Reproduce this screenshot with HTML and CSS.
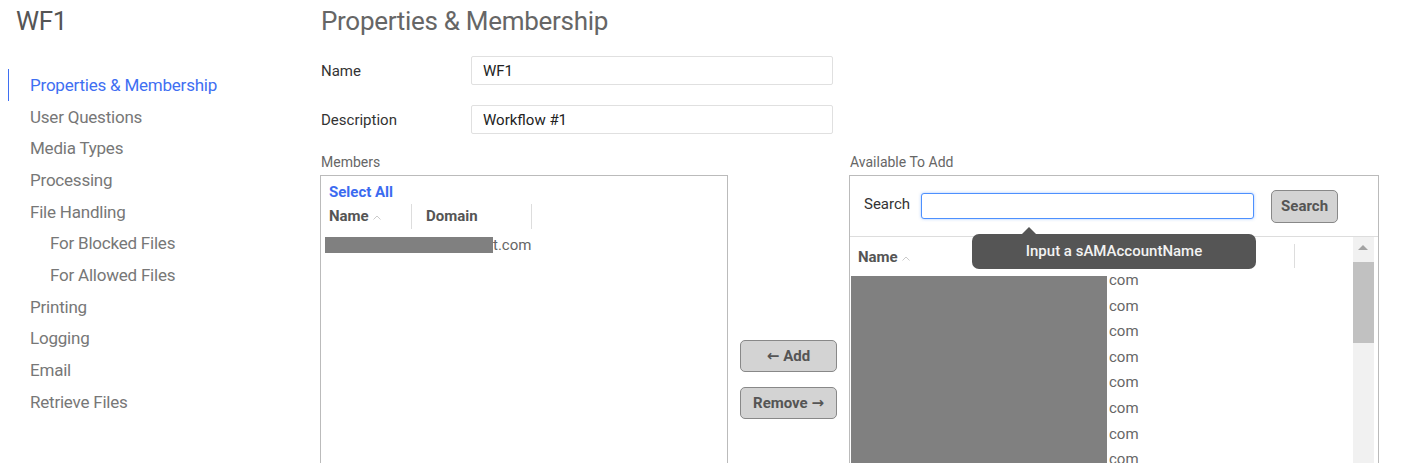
FILE: index.html
```html
<!DOCTYPE html>
<html lang="en">
<head>
    <meta charset="UTF-8">
    <meta name="viewport" content="width=device-width, initial-scale=1.0">
    <title>WF1 - Properties &amp; Membership</title>
    <link rel="stylesheet" href="styles.css">
</head>
<body>
    <div class="page">
        <aside class="sidebar">
            <h1 class="wf-title">WF1</h1>
            <nav class="nav">
                <a class="nav-item active">Properties &amp; Membership</a>
                <a class="nav-item">User Questions</a>
                <a class="nav-item">Media Types</a>
                <a class="nav-item">Processing</a>
                <a class="nav-item">File Handling</a>
                <a class="nav-item sub">For Blocked Files</a>
                <a class="nav-item sub">For Allowed Files</a>
                <a class="nav-item">Printing</a>
                <a class="nav-item">Logging</a>
                <a class="nav-item">Email</a>
                <a class="nav-item">Retrieve Files</a>
            </nav>
        </aside>

        <main class="content">
            <h2 class="page-title">Properties &amp; Membership</h2>

            <div class="field-row">
                <label class="field-label">Name</label>
                <input class="field-input" type="text" value="WF1">
            </div>
            <div class="field-row">
                <label class="field-label">Description</label>
                <input class="field-input" type="text" value="Workflow #1">
            </div>

            <div class="lists">
                <section class="list-panel members">
                    <div class="list-label">Members</div>
                    <div class="list-box">
                        <a class="select-all">Select All</a>
                        <div class="grid-head">
                            <div class="col-name">Name <svg class="caret" viewBox="0 0 8 5" width="8" height="5"><path d="M0.5 4.5 L4 1 L7.5 4.5" fill="none" stroke="#c4c4c4" stroke-width="0.9"/></svg></div>
                            <div class="col-domain">Domain</div>
                        </div>
                        <div class="member-row"><span class="redact"></span>t.com</div>
                    </div>
                </section>

                <div class="move-buttons">
                    <button class="btn"><span class="arrow">&larr;</span> Add</button>
                    <button class="btn">Remove <span class="arrow">&rarr;</span></button>
                </div>

                <section class="list-panel available">
                    <div class="list-label">Available To Add</div>
                    <div class="list-box">
                        <div class="search-row">
                            <label class="search-label">Search</label>
                            <input class="search-input" type="text">
                            <button class="btn search-btn">Search</button>
                            <div class="tooltip">Input a sAMAccountName</div>
                        </div>
                        <div class="result-area">
                            <div class="result-grid">
                                <div class="grid-head wide">
                                    <div class="col-name">Name <svg class="caret" viewBox="0 0 8 5" width="8" height="5"><path d="M0.5 4.5 L4 1 L7.5 4.5" fill="none" stroke="#c4c4c4" stroke-width="0.9"/></svg></div>
                                    <div class="col-rest"></div>
                                </div>
                                <div class="result-rows">
                                    <div class="result-row">com</div>
                                    <div class="result-row">com</div>
                                    <div class="result-row">com</div>
                                    <div class="result-row">com</div>
                                    <div class="result-row">com</div>
                                    <div class="result-row">com</div>
                                    <div class="result-row">com</div>
                                    <div class="result-row">com</div>
                                    <div class="redact-block"></div>
                                </div>
                            </div>
                            <div class="scrollbar">
                                <div class="scroll-up"></div>
                                <div class="scroll-thumb"></div>
                            </div>
                        </div>
                    </div>
                </section>
            </div>
        </main>
    </div>
</body>
</html>
```

FILE: styles.css
```css
html, body {
    margin: 0;
    padding: 0;
    overflow: hidden;
    background: #ffffff;
}

body {
    font-family: Roboto, "Liberation Sans", sans-serif;
    color: #555;
}

.page {
    display: flex;
    height: 463px;
}

/* sidebar */
.sidebar {
    width: 320px;
    flex-shrink: 0;
}

.wf-title {
    margin: 5px 0 0 16px;
    font-size: 26px;
    font-weight: 400;
    line-height: 32px;
    letter-spacing: -0.3px;
    color: #555;
}

.nav {
    margin: 32px 0 0 8px;
    display: flex;
    flex-direction: column;
}

.nav-item {
    display: block;
    padding: 3.85px 0 3.85px 22px;
    line-height: 24px;
    font-size: 17px;
    letter-spacing: -0.22px;
    color: #777;
    cursor: pointer;
}

.nav-item.sub {
    padding-left: 42px;
}

.nav-item.active {
    color: #3f6ff2;
    border-left: 1px solid #3f6ff2;
    padding-left: 21px;
}

/* main */
.content {
    flex: 1;
}

.page-title {
    margin: 5px 0 0 1px;
    font-size: 26px;
    font-weight: 400;
    line-height: 32px;
    letter-spacing: -0.3px;
    color: #666;
}

.field-row {
    display: flex;
    align-items: center;
    margin-top: 19px;
}

.field-row + .field-row {
    margin-top: 20px;
}

.field-label {
    width: 150px;
    padding-left: 1px;
    font-size: 15px;
    color: #333;
}

.field-input {
    width: 362px;
    height: 29px;
    box-sizing: border-box;
    border: 1px solid #e0e0e0;
    border-radius: 2px;
    padding: 0 11px;
    font-family: Roboto, "Liberation Sans", sans-serif;
    font-size: 15px;
    color: #222;
}

/* member lists */
.lists {
    display: flex;
    align-items: flex-start;
    margin-top: 18px;
}

.list-label {
    padding-left: 1px;
    line-height: 20px;
    margin-bottom: 3px;
    font-size: 14px;
    color: #666;
}

.list-box {
    border: 1px solid #bbb;
    height: 300px;
    box-sizing: border-box;
}

.members .list-box {
    width: 408px;
    padding: 6px 8px;
}

.available .list-box {
    width: 530px;
}

.select-all {
    display: block;
    line-height: 20px;
    font-size: 15px;
    font-weight: 700;
    color: #3b6bf0;
    cursor: pointer;
}

.grid-head {
    display: flex;
    height: 25px;
    margin-top: 2px;
    font-size: 15px;
    font-weight: 700;
    color: #555;
}

.grid-head .col-name {
    width: 82px;
    border-right: 1px solid #ddd;
    line-height: 25px;
}

.grid-head .col-domain {
    width: 105px;
    padding-left: 14px;
    border-right: 1px solid #ddd;
    line-height: 25px;
}

.caret {
    margin-left: 1px;
    vertical-align: 1px;
}

.member-row {
    display: flex;
    align-items: center;
    margin: 4px 0 0 -4px;
    line-height: 24px;
    font-size: 15px;
    color: #666;
}

.redact {
    display: inline-block;
    width: 168px;
    height: 16px;
    background: #808080;
}

/* add / remove */
.move-buttons {
    display: flex;
    flex-direction: column;
    gap: 15px;
    width: 97px;
    margin: 188px 12px 0;
}

.btn {
    height: 32px;
    box-sizing: border-box;
    background: #d3d3d3;
    border: 1px solid #888;
    border-radius: 5px;
    font-family: Roboto, "Liberation Sans", sans-serif;
    font-size: 15px;
    font-weight: 700;
    color: #555;
    cursor: pointer;
}

.arrow {
    font-family: "DejaVu Sans", sans-serif;
    font-size: 15px;
    font-weight: 700;
}

/* available */
.search-row {
    position: relative;
    display: flex;
    align-items: center;
    height: 60px;
    padding: 0 14px;
    border-bottom: 1px solid #ddd;
}

.search-label {
    margin-bottom: 5px;
    font-size: 15px;
    color: #333;
}

.search-input {
    width: 333px;
    height: 26px;
    box-sizing: border-box;
    margin-left: 11px;
    border: 1px solid #4d90fe;
    border-radius: 3px;
    box-shadow: 0 0 3px rgba(77, 144, 254, 0.5);
    outline: none;
}

.search-btn {
    width: 67px;
    height: 33px;
    margin-left: 17px;
}

.tooltip {
    position: absolute;
    left: 122px;
    top: 58px;
    width: 284px;
    height: 35px;
    line-height: 35px;
    text-align: center;
    background: #555;
    border-radius: 7px;
    color: #f2f2f2;
    font-size: 15px;
    font-weight: 500;
    z-index: 2;
}

.tooltip::before {
    content: "";
    position: absolute;
    left: 50px;
    top: -7px;
    border-left: 7px solid transparent;
    border-right: 7px solid transparent;
    border-bottom: 7px solid #555;
}

.result-area {
    display: flex;
}

.result-grid {
    flex: 1;
}

.grid-head.wide {
    height: 31px;
    margin: 0;
    padding-left: 8px;
    align-items: flex-end;
}

.grid-head.wide .col-name {
    width: 1px;
    flex: 1;
    border-right: none;
    line-height: 24px;
    margin-bottom: -1px;
}

.grid-head.wide .col-rest {
    width: 58px;
    height: 24px;
    border-left: 1px solid #ddd;
}

.result-rows {
    position: relative;
}

.result-row {
    height: 25.6px;
    line-height: 25.6px;
    padding-left: 259px;
    font-size: 15px;
    color: #666;
}

.redact-block {
    position: absolute;
    left: 1px;
    top: 8px;
    width: 256px;
    height: 400px;
    background: #808080;
}

.scrollbar {
    width: 21px;
    margin-right: 4px;
    height: 240px;
    background: #f1f1f1;
}

.scroll-up {
    height: 25px;
    position: relative;
}

.scroll-up::before {
    content: "";
    position: absolute;
    left: 5px;
    top: 8px;
    border-left: 5px solid transparent;
    border-right: 5px solid transparent;
    border-bottom: 5px solid #a3a3a3;
}

.scroll-thumb {
    height: 81px;
    background: #c1c1c1;
}
```
